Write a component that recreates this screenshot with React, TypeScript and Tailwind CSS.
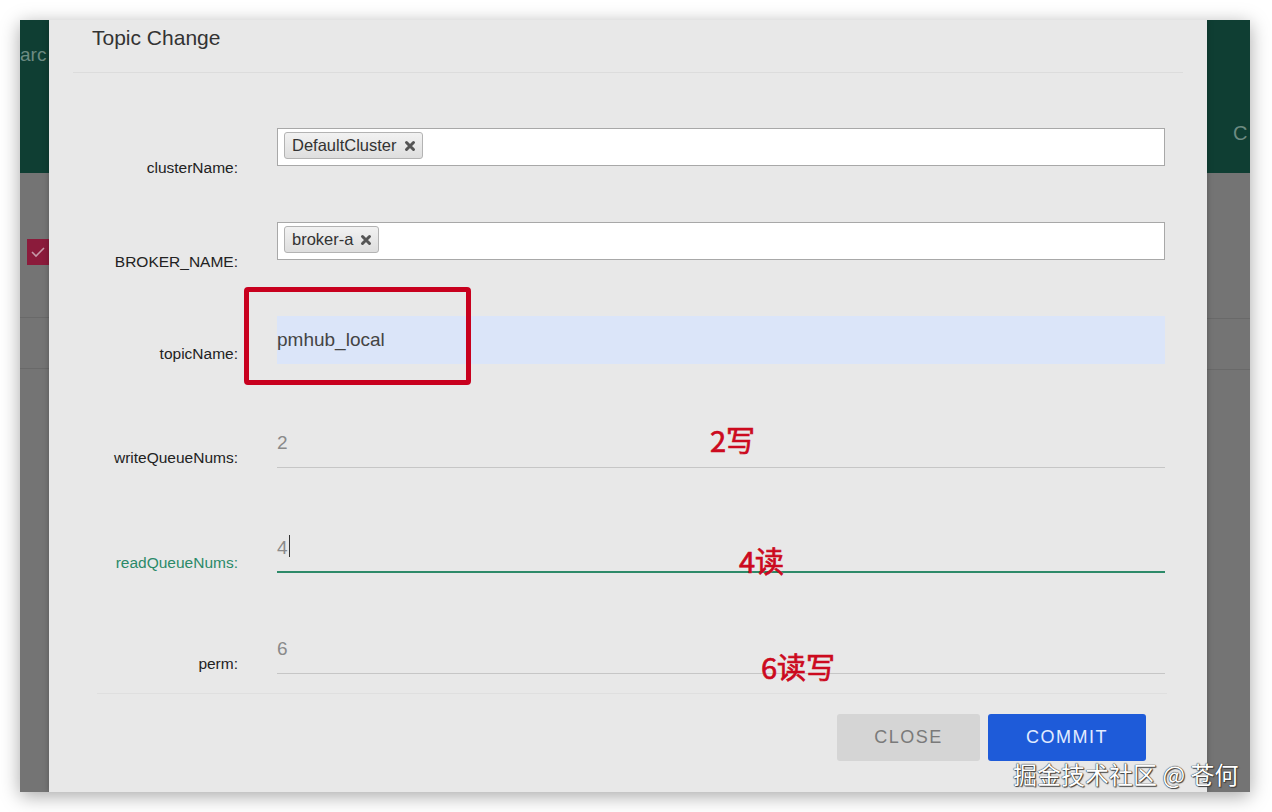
import React from "react";

const sans = "font-['Liberation_Sans','Helvetica','Arial',sans-serif]";
const cjk = "font-['Noto_Sans_CJK_SC','Noto_Sans',sans-serif]";
const note = `absolute text-[29px] leading-none text-[#cc0a1e] [-webkit-text-stroke:0.7px_#cc0a1e] ${cjk}`;

function TagX() {
  return (
    <svg width="12" height="12" viewBox="0 0 12 12" className="ml-[7px]">
      <path d="M2.5 2.5 L9.5 9.5 M9.5 2.5 L2.5 9.5" stroke="#555" strokeWidth="3" strokeLinecap="round" />
    </svg>
  );
}

function Tag({ text }: { text: string }) {
  return (
    <div className="h-[27px] flex items-center pl-[7px] pr-[6px] border border-[#b3b3b3] rounded-[3px] bg-gradient-to-b from-[#f2f2f2] to-[#dedede] text-[16.5px] text-[#333]">
      {text}
      <TagX />
    </div>
  );
}

function Label({ text, active }: { text: string; active?: boolean }) {
  return (
    <div className={`w-[189px] shrink-0 text-right text-[15.5px] leading-5 ${active ? "text-[#2b8a68]" : "text-[#222]"}`}>
      {text}
    </div>
  );
}

function SelectRow({ label, tag, mt }: { label: string; tag: string; mt: string }) {
  return (
    <div className={`flex items-end ${mt}`}>
      <Label text={label} />
      <div className="ml-[39px] w-[888px] h-[38px] mb-[12px] bg-white border border-[#a8a8a8] flex items-start pl-[6px] pt-[3px]">
        <Tag text={tag} />
      </div>
    </div>
  );
}

function TextRow({ label, value, mt, active }: { label: string; value: string; mt: string; active?: boolean }) {
  return (
    <div className={`flex items-end ${mt}`}>
      <Label text={label} active={active} />
      <div
        className={`ml-[39px] w-[888px] h-[48px] pt-[11px] text-[19px] leading-6 text-[#8a8a8a] flex items-start ${
          active ? "border-b-2 border-[#2d8a69]" : "border-b border-[#c6c6c6]"
        }`}
      >
        {value}
        {active && <span className="inline-block w-px h-[22px] bg-[#333] ml-[1px] mt-[-1px]" />}
      </div>
    </div>
  );
}

function LeftStrip() {
  return (
    <div className="w-[29px] shrink-0 flex flex-col">
      <div className="h-[153px] bg-[#0f3e33] pt-[21px]">
        <div className="text-[19px] leading-7 text-[#6d8b82] whitespace-nowrap">arc</div>
      </div>
      <div className="flex-1 bg-[#747474] flex flex-col">
        <div className="mt-[66px] ml-[7px] w-[22px] h-[26px] bg-[#8b1b3b] flex items-center justify-center">
          <svg width="16" height="12" viewBox="0 0 16 12">
            <path d="M2 6 L6 10 L14 2" stroke="#c79aa8" strokeWidth="1.6" fill="none" />
          </svg>
        </div>
        <div className="mt-[52px] h-px bg-[#696969]" />
        <div className="mt-[50px] h-px bg-[#696969]" />
      </div>
    </div>
  );
}

function RightStrip() {
  return (
    <div className="w-[43px] shrink-0 flex flex-col">
      <div className="h-[153px] bg-[#0f3e33] pt-[99px] pl-[26px]">
        <div className="text-[20px] leading-7 text-[#6d8b82] whitespace-nowrap">C</div>
      </div>
      <div className="flex-1 bg-[#747474] flex flex-col">
        <div className="mt-[145px] h-px bg-[#696969]" />
        <div className="mt-[50px] h-px bg-[#696969]" />
      </div>
    </div>
  );
}

function Modal() {
  return (
    <div className="relative w-[1158px] shrink-0 bg-[#e8e8e8] flex flex-col shadow-[0_0_6px_rgba(0,0,0,0.25)]">
      <div className="pl-[43px] pt-[4px] text-[21px] leading-7 text-[#333]">Topic Change</div>
      <div className="mt-[20px] mx-6 h-px bg-[#dcdcdc]" />

      <SelectRow label="clusterName:" tag="DefaultCluster" mt="mt-[55px]" />
      <SelectRow label="BROKER_NAME:" tag="broker-a" mt="mt-[44px]" />

      <div className="flex items-end mt-[44px]">
        <Label text="topicName:" />
        <div className="ml-[39px] w-[888px] h-[48px] bg-[#dbe5f9] flex items-center text-[19px] text-[#444]">
          pmhub_local
        </div>
      </div>

      <TextRow label="writeQueueNums:" value="2" mt="mt-[56px]" />
      <TextRow label="readQueueNums:" value="4" mt="mt-[57px]" active />
      <TextRow label="perm:" value="6" mt="mt-[53px]" />

      <div className="mt-[19px] ml-[48px] mr-[40px] h-px bg-[#dfdfdf]" />

      <div className="mt-[20px] pr-[61px] flex justify-end gap-[8px]">
        <button className="w-[143px] h-[47px] rounded-[3px] bg-[#d5d5d5] text-[18px] tracking-[1.5px] text-[#7a7a7a]">
          CLOSE
        </button>
        <button className="w-[158px] h-[47px] rounded-[3px] bg-[#1e5bd9] text-[18px] tracking-[1.5px] text-[#e2ecff]">
          COMMIT
        </button>
      </div>

      {/* annotations drawn over the form */}
      <div className="absolute left-[195px] top-[267px] w-[227px] h-[98px] border-[5px] border-[#c8001e] rounded-[4px]" />
      <div className={`${note} left-[661px] top-[405px]`}>2写</div>
      <div className={`${note} left-[690px] top-[526px]`}>4读</div>
      <div className={`${note} left-[712px] top-[632px]`}>6读写</div>
    </div>
  );
}

export default function App() {
  return (
    <div className={`w-[1272px] h-[812px] bg-white pt-[20px] pl-[20px] overflow-hidden ${sans}`}>
      <div className="relative flex w-[1230px] h-[772px] overflow-hidden shadow-[0_4px_18px_rgba(0,0,0,0.35)]">
        <LeftStrip />
        <Modal />
        <RightStrip />
        <div
          className={`absolute left-[993px] top-[738px] text-[24px] leading-8 text-white whitespace-nowrap ${cjk} [text-shadow:0_0_1px_#222,0_0_1px_#222,1px_1px_1px_#444]`}
        >
          掘金技术社区 @ 苍何
        </div>
      </div>
    </div>
  );
}
